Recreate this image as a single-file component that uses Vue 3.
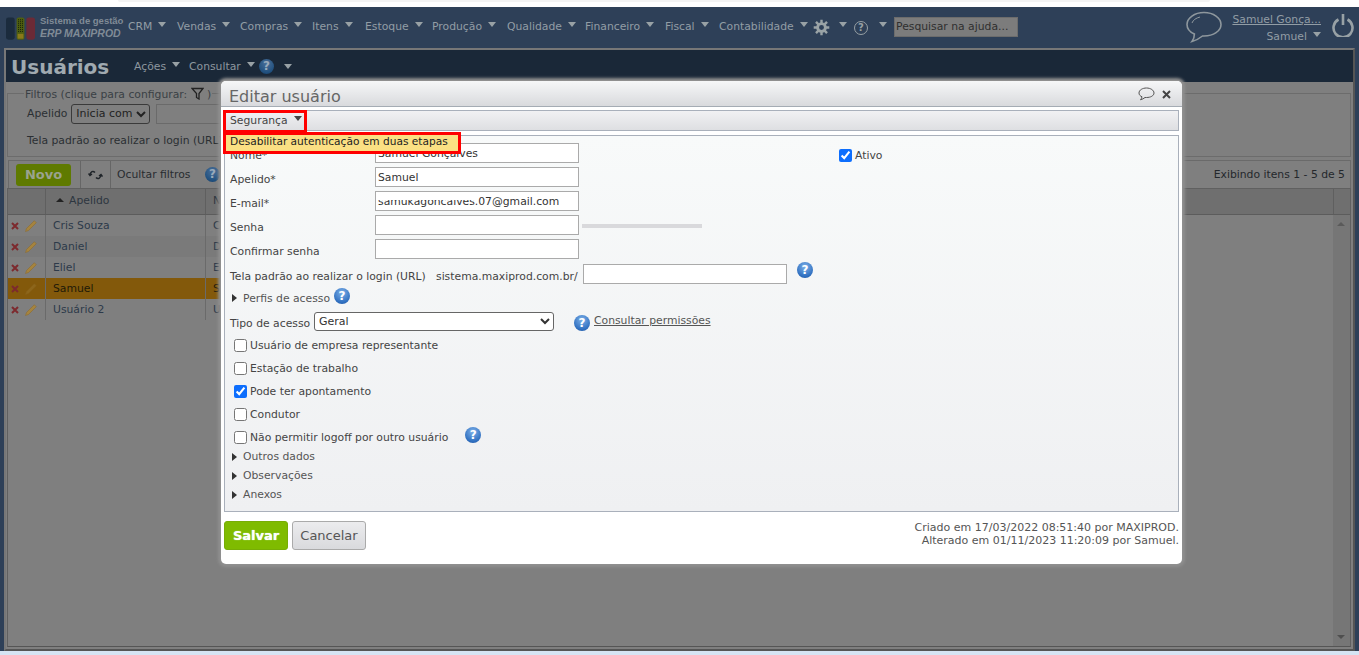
<script setup>
const menus = [
  { label: 'CRM', w: 49 }, { label: 'Vendas', w: 63 }, { label: 'Compras', w: 72 }, { label: 'Itens', w: 53 },
  { label: 'Estoque', w: 67 }, { label: 'Produção', w: 75 }, { label: 'Qualidade', w: 78 }, { label: 'Financeiro', w: 80 },
  { label: 'Fiscal', w: 54 }, { label: 'Contabilidade', w: 94 }
]
const rows = [
  { a: 'Cris Souza', n: 'Cris Souza' }, { a: 'Daniel', n: 'Daniel' }, { a: 'Eliel', n: 'Eliel' },
  { a: 'Samuel', n: 'Samuel Gonçalves', cur: true }, { a: 'Usuário 2', n: 'Usuário 2' }
]
const checks = [
  { t: 'Usuário de empresa representante' }, { t: 'Estação de trabalho' },
  { t: 'Pode ter apontamento', c: true }, { t: 'Condutor' },
  { t: 'Não permitir logoff por outro usuário', help: true }
]
</script>

<template>
  <div class="page">
    <div class="topstrip"><div class="topstrip-in"></div></div>

    <header class="nav">
      <svg class="logo" width="30" height="24" viewBox="0 0 31 24">
        <rect x="0" y="0" width="9" height="23" rx="2.500" fill="#1b2b3d" />
        <rect x="11" y="0" width="8" height="23" rx="2" fill="#4f5f10" />
        <rect x="12" y="17" width="6" height="5" fill="#8a7a1a" />
        <path d="M13 2v13M15 2v13M17 2v13" stroke="#141d08" stroke-width="1" stroke-dasharray="1 1" />
        <rect x="21" y="0" width="9" height="23" rx="2.500" fill="#6b2a36" />
      </svg>
      <div class="brand">
        <div class="brand-a">Sistema de gestão</div>
        <div class="brand-b">ERP MAXIPROD</div>
      </div>
      <nav class="menu">
        <span v-for="m in menus" :key="m.label" class="menu-item" :style="{ width: m.w + 'px' }">{{ m.label }}<i class="caret"></i></span>
      </nav>
      <svg class="gear" width="17" height="17" viewBox="0 0 24 24" fill="none" stroke="#9aa3a6">
        <circle cx="12" cy="12" r="5.500" stroke-width="4" />
        <path d="M12 1v5M12 18v5M1 12h5M18 12h5M4.200 4.200l3.500 3.500M16.300 16.300l3.500 3.500M19.800 4.200l-3.500 3.500M7.700 16.300l-3.500 3.500" stroke-width="3.400" />
      </svg>
      <i class="caret caret-gear"></i>
      <span class="nav-help">?</span>
      <i class="caret caret-help"></i>
      <div class="search">Pesquisar na ajuda...</div>
      <svg class="chat" width="36" height="32" viewBox="0 0 36 32" fill="none" stroke="#8e979d" stroke-width="1.600">
        <path d="M18 1.500C8.500 1.500 1 7 1 13.500c0 4.200 3 7.600 7.400 9.600C8.400 26 7.500 28.600 6 30.500c4-1 8-3.500 10.500-5.500H18c9.500 0 17-5 17-11.500S27.500 1.500 18 1.500Z" />
        <path d="M6 12c1-3 4-5 8-6" stroke-width="1" />
      </svg>
      <div class="user">
        <a class="user-name">Samuel Gonça...</a>
        <div class="user-sub">Samuel<i class="caret caret-user"></i></div>
      </div>
      <svg class="power" width="22" height="24" viewBox="0 0 22 24" fill="none" stroke="#98a1a5" stroke-width="2.600">
        <path d="M6.500 6.500a9.500 9.500 0 1 0 9 0" />
        <path d="M11 1v11" />
      </svg>
    </header>

    <main class="body">
      <div class="titlebar">
        <h1 class="title">Usuários</h1>
        <span class="tmenu tm1">Ações<i class="caret"></i></span>
        <span class="tmenu tm2">Consultar<i class="caret"></i></span>
        <span class="help dim">?</span>
        <i class="caret tcaret"></i>
      </div>

      <fieldset class="filters">
        <legend>Filtros (clique para configurar:
          <svg width="13" height="13" viewBox="0 0 13 13" fill="none" stroke="#222" stroke-width="1.300"><path d="M1 1.500h11L8 6.500V12L5.500 10.500v-4Z" /></svg>
          )</legend>
        <div class="f-row">
          <span>Apelido</span>
          <select class="f-sel" tabindex="-1"><option>Inicia com</option></select>
          <span class="f-input"></span>
        </div>
        <div class="f-row f-row2">Tela padrão ao realizar o login (URL)</div>
      </fieldset>

      <div class="toolbar">
        <button class="novo" tabindex="-1">Novo</button>
        <span class="tb-cell tb-ref">
          <svg width="15" height="12" viewBox="0 0 15 12" fill="none" stroke="#1f2429" stroke-width="1.500">
            <path d="M7 3.500C5 1.500 2.500 2.500 2 6M.5 4.500 2 6.500l2-1.500M8 8.500c2 2 4.500 1 5-2.500M14.500 7.500 13 5.500l-2 1.500" />
          </svg>
        </span>
        <span class="tb-cell tb-oc">Ocultar filtros</span>
        <span class="help dim tb-help">?</span>
        <span class="showing">Exibindo itens 1 - 5 de 5</span>
      </div>

      <div class="table">
        <div class="thead">
          <div class="c0"></div>
          <div class="c1"><i class="sort"></i>Apelido</div>
          <div class="c2 c2h">Nome</div>
          <div class="sb-h"></div>
        </div>
        <div class="tbody">
          <div class="rows">
            <div v-for="(r, i) in rows" :key="r.a" class="row" :class="{ alt: i % 2 === 1, cur: r.cur }">
              <div class="c0">
                <svg width="8" height="8" viewBox="0 0 8 8" stroke="#7d2a2e" stroke-width="2"><path d="M1 1l6 6M7 1L1 7" /></svg>
                <svg class="pencil" width="14" height="14" viewBox="0 0 14 14" fill="none">
                  <path d="M1.500 12.500l1-3 7.800-7.800 2 2L4.500 11.500Z" fill="#a5843f" stroke="#8d6b30" stroke-width=".6" :opacity="r.cur ? 0.3 : 1" />
                </svg>
              </div>
              <div class="c1">{{ r.a }}</div>
              <div class="c2">{{ r.n }}</div>
            </div>
          </div>
          <div class="scroll"><i class="sb-up"></i><i class="sb-down"></i></div>
        </div>
      </div>
    </main>
    <div class="bottom"></div>

    <section class="modal">
      <div class="m-head">
        <span class="m-title">Editar usuário</span>
        <svg class="m-chat" width="17" height="14" viewBox="0 0 17 14" fill="none" stroke="#555" stroke-width="1"><path d="M8.500 1C4.500 1 1 3 1 6c0 1.800 1.200 3 3 3.800-.2 1-.7 2-1.500 3 1.800-.4 3.300-1.400 4.500-2.300h1.500C12.500 10.500 16 8.800 16 6s-3.500-5-7.500-5Z" /></svg>
        <svg class="m-x" width="9" height="9" viewBox="0 0 9 9" stroke="#444" stroke-width="2"><path d="M1 1l7 7M8 1L1 8" /></svg>
      </div>
      <div class="m-bar"><span class="m-sec">Segurança<i class="caret dark"></i></span></div>
      <div class="m-box">
        <div class="fr first">
          <label>Nome*</label><span class="inp">Samuel Gonçalves</span>
          <span class="ativo"><input type="checkbox" checked tabindex="-1" />Ativo</span>
        </div>
        <div class="fr"><label>Apelido*</label><span class="inp">Samuel</span></div>
        <div class="fr">
          <label>E-mail*</label>
          <span class="inp email">samukagoncalves.07@gmail.com<i class="wipe"></i></span>
        </div>
        <div class="fr"><label>Senha</label><span class="inp"></span><i class="strength"></i></div>
        <div class="fr"><label>Confirmar senha</label><span class="inp"></span></div>
        <div class="fr url">
          <label>Tela padrão ao realizar o login (URL)</label>
          <span class="domain">sistema.maxiprod.com.br/</span>
          <span class="inp"></span>
          <span class="help url-help">?</span>
        </div>
        <div class="tog perfis"><i class="tri"></i>Perfis de acesso<span class="help perfis-help">?</span></div>
        <div class="tipo">
          <label>Tipo de acesso</label>
          <select class="sel" tabindex="-1"><option>Geral</option></select>
          <span class="help tipo-help">?</span>
          <a class="perm">Consultar permissões</a>
        </div>
        <div class="chks">
          <div v-for="c in checks" :key="c.t" class="chk">
            <input type="checkbox" :checked="c.c" tabindex="-1" />{{ c.t }}
            <span v-if="c.help" class="help chk-help">?</span>
          </div>
        </div>
        <div class="tog t2"><i class="tri"></i>Outros dados</div>
        <div class="tog"><i class="tri"></i>Observações</div>
        <div class="tog"><i class="tri"></i>Anexos</div>
      </div>
      <div class="m-foot">
        <button class="save" tabindex="-1">Salvar</button>
        <button class="cancel" tabindex="-1">Cancelar</button>
        <div class="audit">Criado em 17/03/2022 08:51:40 por MAXIPROD.<br />Alterado em 01/11/2023 11:20:09 por Samuel.</div>
      </div>
    </section>

    <div class="mark mark1"></div>
    <div class="mark mark2">Desabilitar autenticação em duas etapas</div>
  </div>
</template>

<style>
html, body { margin: 0; padding: 0; background: #fff; overflow: hidden; }
</style>

<style scoped>
* { box-sizing: border-box; }
.page { position: relative; width: 1359px; height: 655px; overflow: hidden; display: flex; flex-direction: column; background: #fff; font: 10.800px/13px "DejaVu Sans", Verdana, sans-serif; color: #333; }
.topstrip { height: 7px; flex: none; background: #fff; }
.topstrip-in { margin-left: 118px; width: 1092px; height: 2px; background: #f4f4f4; border-radius: 0 0 4px 4px; }
.caret { display: inline-block; width: 0; height: 0; border: 4.500px solid transparent; border-top: 5px solid #98a1a5; border-bottom: 0; margin-left: 6px; vertical-align: 3px; }
.caret.dark { border-top-color: #444; }

.nav { flex: none; height: 41px; background: #2e4058; display: flex; align-items: center; color: #929da5; position: relative; }
.logo { margin-left: 6px; flex: none; margin-top: 2px; }
.brand { margin-left: 4px; width: 88px; flex: none; white-space: nowrap; margin-top: -1px; font-family: "Liberation Sans", Arial, sans-serif; }
.brand-a { font-size: 9.500px; line-height: 12px; font-weight: bold; color: #808b96; }
.brand-b { font-size: 10.500px; line-height: 13px; font-style: italic; font-weight: bold; color: #808b96; }
.menu { display: flex; margin-top: -2px; }
.menu-item { white-space: nowrap; flex: none; }
.gear { flex: none; }
.caret-gear { margin-left: 9px; margin-top: -6px; vertical-align: baseline; }
.nav-help { width: 14px; height: 14px; border-radius: 50%; border: 1.500px solid #98a1a5; font-size: 10px; line-height: 11px; text-align: center; font-weight: bold; margin-left: 7px; flex: none; color: #98a1a5; }
.caret-help { margin-left: 11px; margin-top: -6px; }
.search { margin-left: 7px; width: 124px; height: 20px; margin-top: -2px; background: #7c7c7c; border: 1px solid #6c6c6c; color: #2f2f2f; line-height: 18px; padding-left: 1px; white-space: nowrap; flex: none; }
.chat { margin-left: 168px; margin-top: -2px; flex: none; }
.user { margin-left: 10px; width: 89px; flex: none; text-align: right; }
.user-name { color: #929da5; text-decoration: underline; display: block; white-space: nowrap; }
.user-sub { margin-top: 4px; white-space: nowrap; }
.caret-user { margin-left: 6px; }
.power { margin-left: 11px; margin-top: -5px; flex: none; }

.body { flex: 1; min-height: 0; background: #7f7f7f; border: 2px solid #777; border-right-color: #555; border-bottom-color: #555; margin: 0 4px; display: flex; flex-direction: column; position: relative; box-shadow: -4px 0 0 #2e4058, 4px 0 0 #2e4058; }
.bottom { flex: none; height: 4px; background: #d6e4f3; }
.titlebar { flex: none; height: 32px; background: #1a2838; display: flex; align-items: center; color: #8d979f; position: relative; padding-top: 1px; }
.title { margin: 0 0 0 5px; font-size: 20px; line-height: 30px; font-weight: bold; color: #a0aab0; width: 123px; flex: none; }
.tmenu { white-space: nowrap; flex: none; }
.tm1 { width: 55px; }
.tm2 { width: 70px; }
.tcaret { margin-left: 10px; }
.help { display: inline-block; flex: none; width: 16px; height: 16px; border-radius: 50%; background: radial-gradient(circle at 50% 30%, #7db0e8, #2f6fc0 70%, #1f4f98); color: #fff; font: bold 12px/16px "DejaVu Sans", sans-serif; text-align: center; }
.help.dim { background: radial-gradient(circle at 50% 30%, #4a6f98, #20507f 70%, #163a60); color: #9ab; width: 15px; height: 15px; line-height: 15px; }

.filters { flex: none; margin: 5px 2px 0 1px; padding: 0 0 0 19px; height: 70px; border: 1px solid #6c6c6c; color: #2b2f33; position: relative; }
.filters legend { padding: 0 1px; margin-left: -3px; color: #3a3f45; white-space: nowrap; height: 13px; line-height: 13px; }
.filters legend svg { vertical-align: -2px; }
.f-row { display: flex; align-items: center; gap: 4px; margin-top: 3px; height: 21px; }
.f-sel { width: 79px; height: 20px; background: #7f7f7f; border: 1px solid #3a3a3a; border-radius: 3px; font: 11px "DejaVu Sans", sans-serif; color: #222; padding: 0; }
.f-input { width: 100px; height: 20px; border: 1px solid #6a6a6a; margin-left: 2px; }
.f-row2 { margin-top: 6px; display: block; line-height: 21px; white-space: nowrap; }

.toolbar { flex: none; height: 28px; margin: 3px 2px 0 2px; border: 1px solid #6a6a6a; border-bottom: 0; display: flex; align-items: center; padding-left: 7px; position: relative; color: #282c30; }
.novo { width: 55px; height: 22px; background: #5f7a00; border: 0; border-radius: 3px; color: #9aa38e; font: bold 13px "DejaVu Sans", sans-serif; padding: 0; }
.tb-cell { display: flex; align-items: center; height: 27px; border-left: 1px solid #666; flex: none; }
.tb-ref { margin-left: 9px; width: 30px; padding-left: 7px; }
.tb-oc { width: 86px; padding-left: 6px; white-space: nowrap; }
.tb-help { margin-left: 9px; }
.showing { margin-left: auto; margin-right: 5px; color: #24282c; white-space: nowrap; }

.table { flex: 1; min-height: 0; margin: 0 2px 2px 1px; border: 1px solid #606060; border-bottom-color: #555; display: flex; flex-direction: column; }
.thead { flex: none; height: 26px; display: flex; background: #6f6f6f; border-bottom: 1px solid #5c5c5c; color: #2d3640; line-height: 24px; }
.c0 { width: 38px; flex: none; border-right: 1px solid #5f5f5f; display: flex; align-items: center; padding-left: 3px; gap: 5px; }
.c1 { width: 160px; flex: none; border-right: 1px solid #5f5f5f; padding-left: 7px; white-space: nowrap; }
.c2 { flex: 1; min-width: 0; padding-left: 7px; white-space: nowrap; overflow: hidden; }
.thead .c1 { padding-left: 10px; }
.sort { display: inline-block; width: 0; height: 0; border: 4px solid transparent; border-bottom: 4px solid #222; border-top: 0; margin-right: 5px; vertical-align: 2px; }
.sb-h { width: 17px; flex: none; border-left: 1px solid #5f5f5f; }
.tbody { flex: 1; min-height: 0; display: flex; }
.rows { flex: 1; min-width: 0; }
.scroll { width: 17px; flex: none; background: #767676; position: relative; }
.sb-up, .sb-down { position: absolute; left: 4px; width: 0; height: 0; border: 4px solid transparent; }
.sb-up { top: 7px; border-top: 0; border-bottom: 4px solid #5a5a5a; }
.sb-down { bottom: 7px; border-bottom: 0; border-top: 4px solid #4f4f4f; }
.row { display: flex; width: 216px; height: 21px; line-height: 21px; color: #2d3a4a; background: #7f7f7f; }
.row.alt { background: #7a7a7a; }
.row.cur { background: #83590b; color: #1f1a08; }
.row .c0, .row .c1 { border-right-color: #6a6a6a; }

.modal { position: absolute; left: 221px; top: 81px; width: 961px; height: 483px; background: #fff; border-radius: 5px; box-shadow: 0 0 0 1px #8f8f8f, 0 0 3px 3px #8f8f8f; display: flex; flex-direction: column; padding: 0 3px; }
.m-head { flex: none; height: 26px; margin: 0 -3px; padding: 7px 11px 0 8px; display: flex; align-items: center; border-radius: 5px 5px 0 0; background: linear-gradient(#f6f7f8, #d9dadd); border-bottom: 1px solid #a5acb4; }
.m-title { font-size: 16px; line-height: 20px; color: #666; margin-right: auto; }
.m-chat { margin-top: -6px; }
.m-x { margin: -6px 0 0 7px; }
.m-bar { flex: none; height: 21px; margin-top: 3px; border: 1px solid #a9b0bb; background: linear-gradient(#f1f1f3, #dedfe2); line-height: 19px; padding-left: 5px; color: #444; }
.m-sec { white-space: nowrap; }
.m-box { flex: none; height: 377px; margin-top: 4px; border: 1px solid #a9b0bb; background: linear-gradient(#f8fafa, #eff0f2); padding: 7px 0 0 5px; color: #444; }
.fr { display: flex; align-items: flex-start; height: 24px; position: relative; }
.fr label { width: 145px; flex: none; padding-top: 6px; white-space: nowrap; }
.inp { display: block; width: 204px; height: 20px; flex: none; background: #fff; border: 1px solid #aaa; line-height: 18px; padding: 1px 0 0 2px; white-space: nowrap; color: #333; position: relative; }
.wipe { position: absolute; left: 1px; top: 1px; width: 98px; height: 7px; background: #fff; }
.ativo { margin-left: 260px; display: flex; align-items: center; gap: 3px; padding-top: 6px; color: #444; }
.ativo input, .chk input { margin: 0; width: 13px; height: 13px; accent-color: #0d6efd; flex: none; }
.strength { width: 120px; height: 4px; margin: 9px 0 0 3px; background: #d9d9dc; flex: none; }
.fr.url { height: 25px; margin-top: 1px; }
.fr.url label { width: 206px; padding-top: 6px; }
.domain { width: 147px; flex: none; padding-top: 6px; white-space: nowrap; }
.url-help { margin: -2px 0 0 10px; }
.tog { display: flex; align-items: center; white-space: nowrap; color: #555; height: 19px; margin-left: 2px; }
.tri { width: 0; height: 0; border: 4px solid transparent; border-left: 5px solid #333; border-right: 0; margin-right: 6px; }
.perfis { height: 18px; }
.perfis-help { margin: -5px 0 0 4px; }
.tipo { display: flex; align-items: center; height: 21px; margin-top: 4px; }
.tipo label { width: 84px; flex: none; padding-top: 3px; white-space: nowrap; }
.sel { width: 240px; height: 19px; background: #fff; border: 1px solid #666; border-radius: 3px; font: 11px "DejaVu Sans", sans-serif; color: #333; padding: 0; flex: none; }
.tipo-help { margin-left: 20px; margin-top: 2px; }
.perm { margin-left: 4px; text-decoration: underline; color: #555; margin-top: -2px; white-space: nowrap; }
.chks { margin-top: 2px; }
.chk { display: flex; align-items: center; gap: 3px; height: 23px; margin-left: 4px; white-space: nowrap; }
.chk-help { margin: -5px 0 0 14px; }
.t2 { margin-top: -2px; }
.m-foot { flex: 1; display: flex; align-items: flex-start; padding-top: 9px; }
.save { width: 64px; height: 29px; background: #7fbb00; border: 1px solid #77ad06; border-radius: 3px; color: #fff; font: bold 13px "DejaVu Sans", sans-serif; padding: 0; text-shadow: 0 0 1px #dfe; }
.cancel { width: 74px; height: 29px; margin-left: 4px; background: linear-gradient(#ececee, #d9dadd); border: 1px solid #aaa; border-radius: 3px; color: #555; font: 13px "DejaVu Sans", sans-serif; padding: 0; }
.audit { margin-left: auto; text-align: right; color: #555; font-size: 11px; line-height: 13px; white-space: nowrap; }

.mark { position: absolute; border: 3px solid #f00; }
.mark1 { left: 223px; top: 110px; width: 84px; height: 23px; pointer-events: none; }
.mark2 { left: 223px; top: 132px; width: 238px; height: 22px; background: #fbe083; color: #222; font-size: 10.600px; line-height: 13px; padding-left: 4px; white-space: nowrap; }
</style>
